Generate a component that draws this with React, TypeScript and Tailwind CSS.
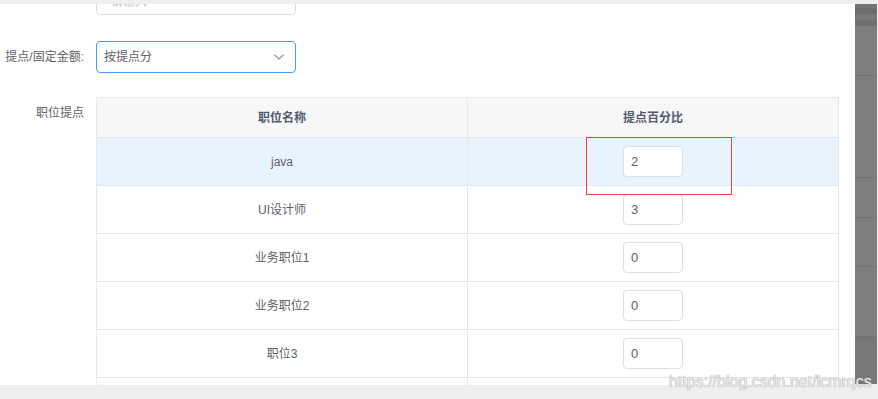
import * as React from "react";

const rows = [
  { name: "java", value: "2", active: true },
  { name: "UI设计师", value: "3" },
  { name: "业务职位1", value: "0" },
  { name: "业务职位2", value: "0" },
  { name: "职位3", value: "0" },
  { name: "", value: "" },
];

const font = {
  fontFamily: '"Liberation Sans", "Noto Sans CJK SC", sans-serif',
};

export default function App() {
  return (
    <div
      className="relative w-[878px] h-[399px] overflow-hidden bg-[#efefef]"
      style={font}
    >
      <div className="flex pt-[4px]">
        {/* dialog body */}
        <div className="w-[855px] h-[381px] overflow-hidden bg-white">
          {/* partial input at top */}
          <div className="flex mt-[-21px]">
            <div className="w-[96px]" />
            <div className="w-[200px] h-[32px] rounded border border-[#dcdfe6] px-[14px] text-[12px] leading-[36px] text-[#c0c4cc]">
              请输入
            </div>
          </div>

          {/* select row */}
          <div className="flex mt-[26px] h-[32px] items-center">
            <div className="w-[96px] pr-[12px] text-right text-[12px] text-[#606266]">
              提点/固定金额:
            </div>
            <div className="w-[200px] h-[32px] rounded border border-[#409eff] flex items-center justify-between pl-[7px] pr-[10px]">
              <span className="text-[12px] text-[#606266]">按提点分</span>
              <svg width="12" height="8" viewBox="0 0 12 8" fill="none">
                <path
                  d="M1.5 1.8 L6 6 L10.5 1.8"
                  stroke="#909399"
                  strokeWidth="1.2"
                />
              </svg>
            </div>
          </div>

          {/* table row */}
          <div className="flex mt-[24px]">
            <div className="w-[96px] pr-[12px] text-right text-[12px] leading-[32px] text-[#606266]">
              职位提点
            </div>
            <div className="w-[743px] border-t border-l border-r border-[#e4e7ec]">
              <div className="grid grid-cols-[371px_1fr] h-[40px] border-b border-[#e4e7ec] bg-[#f7f7f8] text-[12px] font-bold text-[#515a6e]">
                <div className="flex items-center justify-center border-r border-[#e4e7ec]">
                  职位名称
                </div>
                <div className="flex items-center justify-center">
                  提点百分比
                </div>
              </div>
              {rows.map((r, i) => (
                <div
                  key={i}
                  className={
                    "grid grid-cols-[371px_1fr] h-[48px] border-b border-[#e4e7ec] text-[12px] text-[#606266] " +
                    (r.active ? "bg-[#e8f4fd]" : "bg-white")
                  }
                >
                  <div className="flex items-center justify-center border-r border-[#e4e7ec]">
                    {r.name}
                  </div>
                  <div className="flex items-center justify-center">
                    {r.value && (
                      <div className="w-[60px] h-[31px] rounded border border-[#dcdfe6] bg-white px-[7px] text-[13px] leading-[29px] text-[#606266]">
                        {r.value}
                      </div>
                    )}
                  </div>
                </div>
              ))}
            </div>
          </div>
        </div>

        {/* background page seen at the right */}
        <div className="w-[22px] h-[380px] flex flex-col bg-[#7e7e7e]">
          <div className="h-[4px] bg-[#747474]" />
          <div className="h-[6px] bg-[#6c6c6c]" />
          <div className="h-[6px] bg-[#787878]" />
          <div className="h-[6px] bg-[#6f6f6f]" />
          <div className="h-[50px] border-b border-[#727272]" />
          <div className="h-[102px] border-b border-[#727272]" />
          <div className="h-[40px] border-b border-[#727272]" />
          <div className="h-[49px] border-b border-[#727272]" />
          <div className="h-[70px] border-b border-[#727272]" />
          <div className="flex-1 bg-[#777777]" />
        </div>
      </div>

      {/* annotation */}
      <div className="absolute left-[586px] top-[137px] w-[146px] h-[58px] border border-[#f43f3f]" />

      {/* watermark */}
      <div
        className="absolute left-[669px] top-[370px] text-[16px] text-white/80 whitespace-nowrap"
        style={{ textShadow: "0 0 1px #9a9a9a, 0 0 1px #9a9a9a" }}
      >
        https://blog.csdn.net/lcmrqcs
      </div>
    </div>
  );
}
